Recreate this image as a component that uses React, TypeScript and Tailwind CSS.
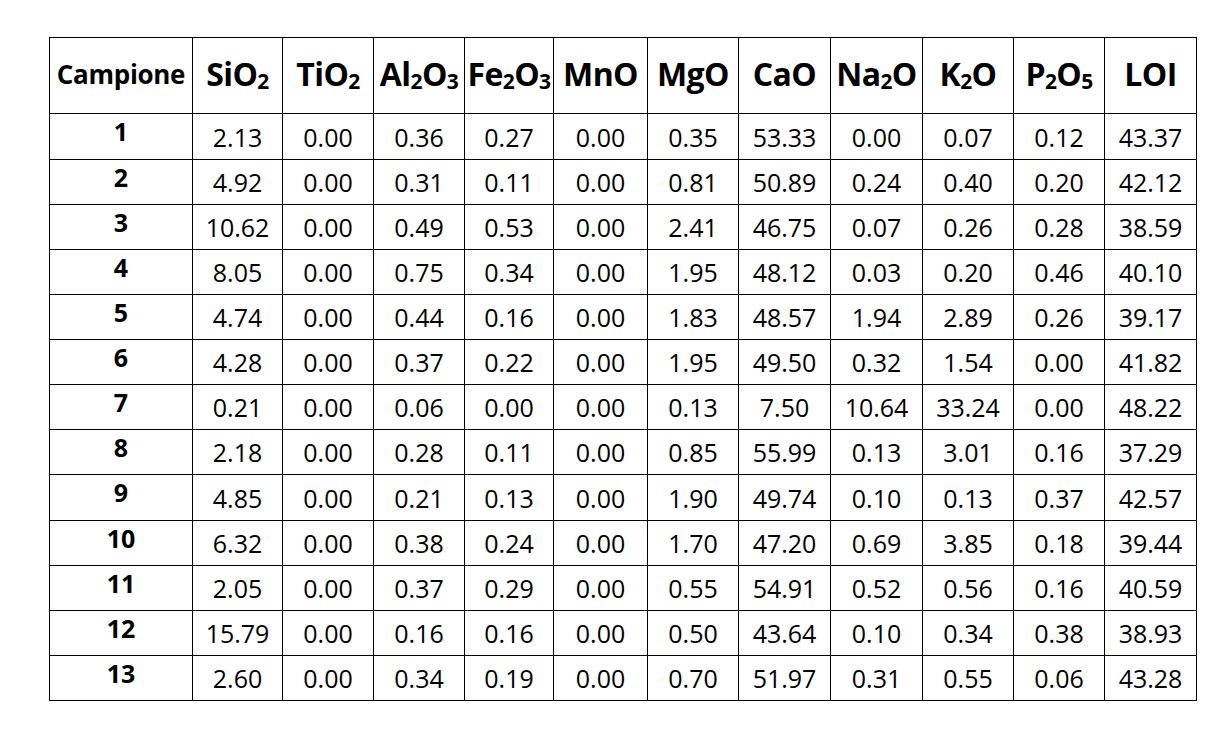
import React from "react";

const S = ({ c }: { c: string }) => (
  <span className="text-[21px] align-[-3px]">{c}</span>
);

const cols: React.ReactNode[] = [
  <>SiO<S c="2" /></>,
  <>TiO<S c="2" /></>,
  <>Al<S c="2" />O<S c="3" /></>,
  <>Fe<S c="2" />O<S c="3" /></>,
  <>MnO</>,
  <>MgO</>,
  <>CaO</>,
  <>Na<S c="2" />O</>,
  <>K<S c="2" />O</>,
  <>P<S c="2" />O<S c="5" /></>,
  <>LOI</>,
];

const data: string[][] = [
  ["2.13", "0.00", "0.36", "0.27", "0.00", "0.35", "53.33", "0.00", "0.07", "0.12", "43.37"],
  ["4.92", "0.00", "0.31", "0.11", "0.00", "0.81", "50.89", "0.24", "0.40", "0.20", "42.12"],
  ["10.62", "0.00", "0.49", "0.53", "0.00", "2.41", "46.75", "0.07", "0.26", "0.28", "38.59"],
  ["8.05", "0.00", "0.75", "0.34", "0.00", "1.95", "48.12", "0.03", "0.20", "0.46", "40.10"],
  ["4.74", "0.00", "0.44", "0.16", "0.00", "1.83", "48.57", "1.94", "2.89", "0.26", "39.17"],
  ["4.28", "0.00", "0.37", "0.22", "0.00", "1.95", "49.50", "0.32", "1.54", "0.00", "41.82"],
  ["0.21", "0.00", "0.06", "0.00", "0.00", "0.13", "7.50", "10.64", "33.24", "0.00", "48.22"],
  ["2.18", "0.00", "0.28", "0.11", "0.00", "0.85", "55.99", "0.13", "3.01", "0.16", "37.29"],
  ["4.85", "0.00", "0.21", "0.13", "0.00", "1.90", "49.74", "0.10", "0.13", "0.37", "42.57"],
  ["6.32", "0.00", "0.38", "0.24", "0.00", "1.70", "47.20", "0.69", "3.85", "0.18", "39.44"],
  ["2.05", "0.00", "0.37", "0.29", "0.00", "0.55", "54.91", "0.52", "0.56", "0.16", "40.59"],
  ["15.79", "0.00", "0.16", "0.16", "0.00", "0.50", "43.64", "0.10", "0.34", "0.38", "38.93"],
  ["2.60", "0.00", "0.34", "0.19", "0.00", "0.70", "51.97", "0.31", "0.55", "0.06", "43.28"],
];

export default function App() {
  return (
    <div
      className="w-[1230px] h-[746px] bg-white pl-[49px] pt-[37px] text-black"
      style={{ fontFamily: '"Open Sans", "Liberation Sans", sans-serif' }}
    >
      <div className="inline-grid grid-cols-[142px_89px_90px_90px_88px_93px_90px_91px_91px_90px_90px_91px] grid-rows-[75px_45px_44px_44px_44px_44px_44px_44px_44px_45px_44px_44px_44px_44px] gap-px bg-black p-px">
        <div className="bg-white flex items-center justify-center text-[26px] font-bold tracking-[-0.3px] pb-[2px]">
          Campione
        </div>
        {cols.map((c, i) => (
          <div
            key={i}
            className="bg-white flex items-center justify-center text-[32px] font-bold tracking-[-0.6px] whitespace-nowrap pb-[4px]"
          >
            <span>{c}</span>
          </div>
        ))}
        {data.map((row, r) => (
          <React.Fragment key={r}>
            <div className="bg-white flex items-center justify-center text-[25px] font-bold pb-[9px]">
              {r + 1}
            </div>
            {row.map((v, j) => (
              <div
                key={j}
                className="bg-white flex items-center justify-center text-[25px] font-medium pt-[2px]"
              >
                {v}
              </div>
            ))}
          </React.Fragment>
        ))}
      </div>
    </div>
  );
}
